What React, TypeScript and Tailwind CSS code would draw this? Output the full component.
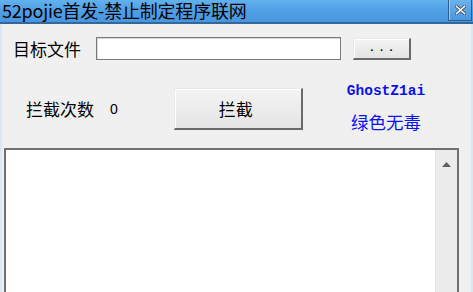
import React from 'react'

function RaisedButton({ className, children }: { className: string; children: React.ReactNode }) {
    return (
        <div
            className={`flex items-center justify-center bg-gradient-to-b from-[#f4f4f4] to-[#e4e4e4] border-t border-l border-t-[#e8e8e8] border-l-[#e8e8e8] border-r-2 border-b-2 border-r-[#6a6a6a] border-b-[#6a6a6a] shadow-[inset_1px_1px_0_#ffffff] ${className}`}
        >
            {children}
        </div>
    )
}

export default function App() {
    return (
        <div
            className='w-[473px] h-[292px] bg-[#f0f0f0] overflow-hidden flex flex-col text-black'
            style={{ fontFamily: '"Noto Sans CJK SC", "Liberation Sans", sans-serif' }}
        >
            {/* title bar */}
            <div className='h-[24px] shrink-0 flex items-start bg-gradient-to-b from-[#62b0ee] via-[#4f9fe6] to-[#4796e0] border-b-2 border-[#35679a]'>
                <span className='pl-[2px] text-[18px] leading-[21px] tracking-[-0.2px] whitespace-nowrap'>
                    52pojie首发-禁止制定程序联网
                </span>
                <div className='ml-auto mr-[1px] w-[24px] h-[21px] flex items-center justify-center bg-gradient-to-b from-[#6cb2ec] to-[#4a97df] border border-[#2e5e8e] border-t-0 shadow-[inset_1px_0_0_#9cccf4]'>
                    <svg width='11' height='10' viewBox='0 0 11 10'>
                        <path d='M1.5 1.5 L9.5 8.5 M9.5 1.5 L1.5 8.5' stroke='#3d4d5e' strokeWidth='3.2' strokeLinecap='square' />
                        <path d='M1.5 1.5 L9.5 8.5 M9.5 1.5 L1.5 8.5' stroke='#ffffff' strokeWidth='1.6' strokeLinecap='square' />
                    </svg>
                </div>
            </div>

            <div className='flex-1 flex flex-col border-l-2 border-r-2 border-[#d6e8f2]'>
                {/* file row */}
                <div className='flex items-center mt-[13px] h-[23px]'>
                    <span className='ml-[11px] text-[17px] leading-[20px] w-[83px]'>目标文件</span>
                    <div className='w-[245px] h-[23px] bg-white border border-[#7a7a7a] shadow-[inset_1px_1px_0_#d8d8d8]' />
                    <RaisedButton className='ml-[12px] w-[58px] h-[22px]'>
                        <span className='text-[11px] leading-none tracking-[3px] pl-[3px] font-bold' style={{ fontFamily: '"Liberation Mono", monospace' }}>...</span>
                    </RaisedButton>
                </div>

                {/* intercept row */}
                <div className='flex items-start mt-[28px]'>
                    <div className='flex items-center h-[42px]'>
                        <span className='ml-[24px] text-[17px] leading-[20px]'>拦截次数</span>
                        <span className='ml-[16px] text-[14px] leading-[20px]' style={{ fontFamily: '"Liberation Sans", sans-serif' }}>0</span>
                    </div>
                    <RaisedButton className='ml-[56px] w-[129px] h-[42px]'>
                        <span className='text-[17px] leading-[20px] pr-[4px]'>拦截</span>
                    </RaisedButton>
                    <div className='ml-[44px] flex flex-col items-center text-[#0a10f5] -mt-[7px]'>
                        <span className='text-[14.5px] leading-[20px] font-bold' style={{ fontFamily: '"Liberation Mono", monospace' }}>GhostZ1ai</span>
                        <span className='mt-[10px] text-[17.5px] leading-[22px]'>绿色无毒</span>
                    </div>
                </div>

                {/* log area */}
                <div className='flex-1 mt-[15px] ml-[2px] mr-[12px] flex bg-white border-2 border-[#707070] border-b-0'>
                    <div className='flex-1' />
                    <div className='w-[22px] bg-[#ececec] border-l border-[#e2e2e2] flex justify-center pt-[12px]'>
                        <svg width='9' height='5' viewBox='0 0 9 5'>
                            <path d='M0 5 L4.5 0 L9 5 Z' fill='#606060' />
                        </svg>
                    </div>
                </div>
            </div>
        </div>
    )
}
